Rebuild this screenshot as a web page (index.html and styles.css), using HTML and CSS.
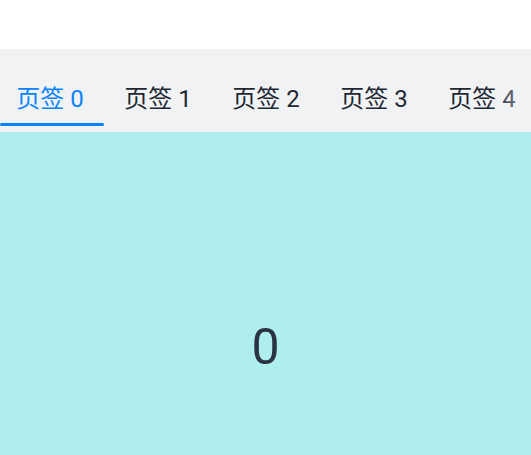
FILE: index.html
```html
<!DOCTYPE html>
<html lang="zh-CN">
<head>
<meta charset="utf-8">
<link rel="stylesheet" href="styles.css">
</head>
<body>
<div class="top"></div>
<div class="tabs-wrap">
  <div class="tabs">
    <div class="tab active">页签 0</div>
    <div class="tab">页签 1</div>
    <div class="tab">页签 2</div>
    <div class="tab">页签 3</div>
    <div class="tab">页签 4</div>
  </div>
  <div class="fade"></div>
</div>
<div class="content">0</div>
</body>
</html>
```
FILE: styles.css
```css
html, body { margin: 0; padding: 0; }
body {
  width: 531px;
  height: 455px;
  overflow: hidden;
  background: #ffffff;
  font-family: Roboto, "Noto Sans CJK SC", sans-serif;
}
.top { height: 49px; background: #ffffff; }
.tabs-wrap {
  position: relative;
  height: 83px;
  background: #f1f2f4;
  overflow: hidden;
}
.tabs {
  display: flex;
  height: 100%;
  white-space: nowrap;
}
.tab {
  flex: 0 0 104px;
  margin-right: 4px;
  box-sizing: border-box;
  display: flex;
  align-items: center;
  justify-content: center;
  padding-top: 12px;
  padding-right: 4px;
  font-size: 24px;
  font-weight: 400;
  color: #1f2733;
  position: relative;
}
.tab.active { color: #0a84ff; }
.tab.active::after {
  content: "";
  position: absolute;
  left: 0;
  right: 0;
  bottom: 6px;
  height: 3px;
  background: #0a84ff;
  border-radius: 2px;
}
.fade {
  position: absolute;
  top: 0;
  right: 0;
  width: 36px;
  height: 100%;
  background: linear-gradient(to right, rgba(241,242,244,0), rgba(241,242,244,0.65));
}
.content {
  height: 430px;
  background: #afeeee;
  display: flex;
  align-items: center;
  justify-content: center;
  font-size: 50px;
  color: #2a3341;
}
```
